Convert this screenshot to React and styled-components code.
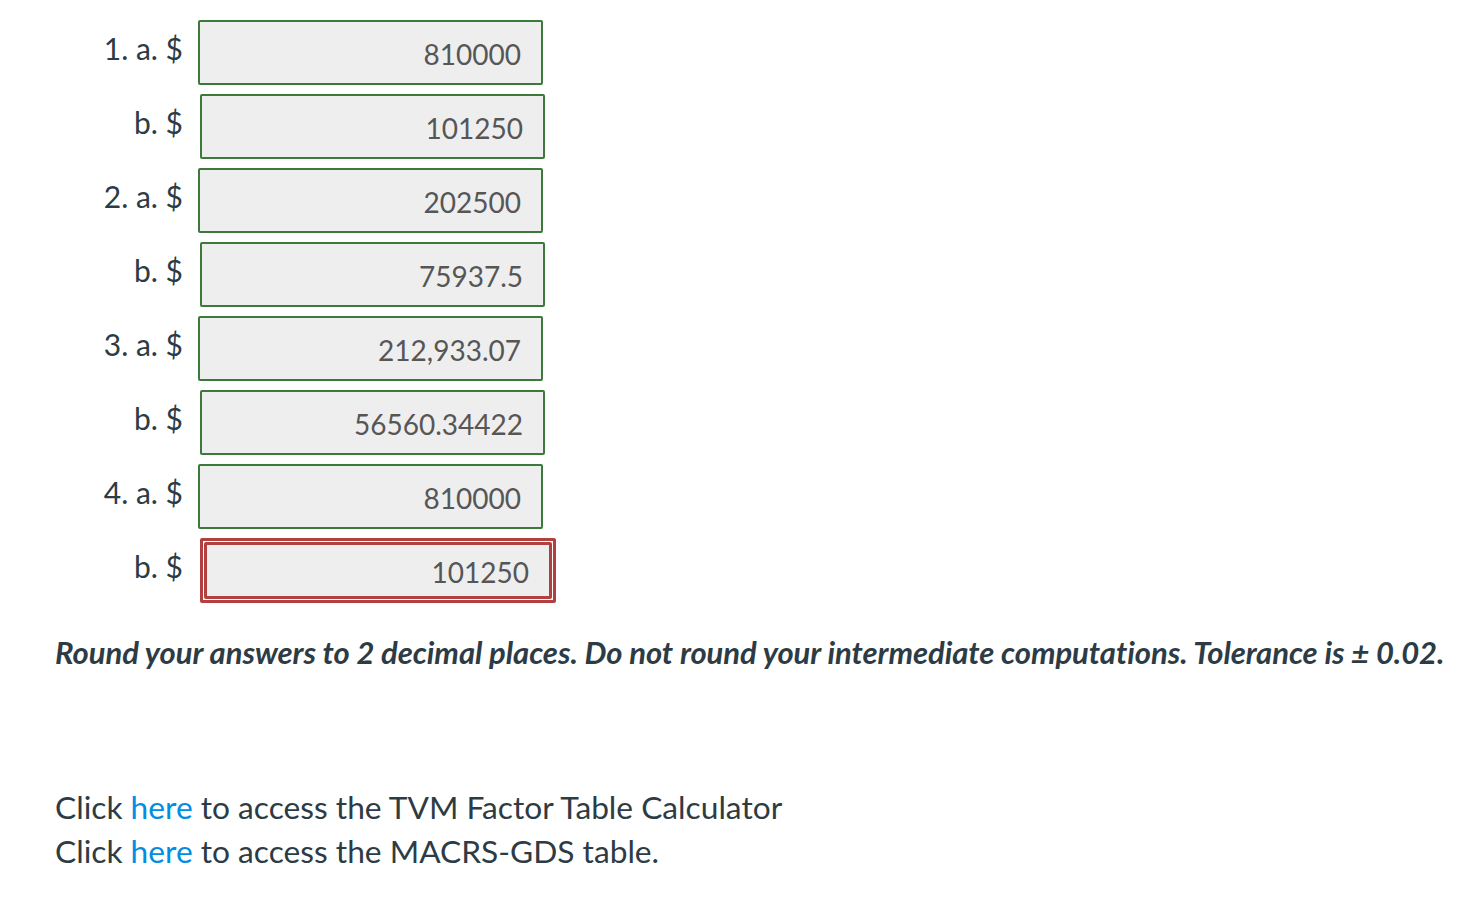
import React from 'react';
import styled, { createGlobalStyle } from 'styled-components';

const GlobalStyle = createGlobalStyle`
  body {
    margin: 0;
    background: #ffffff;
    font-family: Lato, "Open Sans", sans-serif;
    color: #2d3b45;
  }
`;

const Page = styled.div`
  padding: 20px 0 0 55px;
`;

const Answers = styled.div`
  display: flex;
  flex-direction: column;
  gap: 9px;
`;

const Row = styled.div`
  display: flex;
  align-items: flex-start;
`;

const Label = styled.div`
  width: 128px;
  text-align: right;
  font-size: 30px;
  line-height: 34px;
  padding-top: 11px;
  margin-right: ${(p) => (p.$sub ? '17px' : '15px')};
`;

const Field = styled.div`
  box-sizing: border-box;
  width: 345px;
  height: 65px;
  border: 2px solid #3b7a3b;
  border-radius: 2px;
  background: #eeeeee;
  display: flex;
  align-items: center;
  justify-content: flex-end;
  padding: 3px 20px 0 0;
  font-size: 28px;
  color: #565656;
`;

const WrongOuter = styled.div`
  box-sizing: border-box;
  width: 356px;
  height: 65px;
  border: 3px solid #b2403f;
  border-radius: 2px;
  padding: 1px;
  background: #ffffff;
`;

const WrongField = styled(Field)`
  width: 100%;
  height: 100%;
  border: 3px solid #b2403f;
  padding-right: 20px;
`;

const Note = styled.p`
  margin: 31px 0 0 0;
  font-size: 31px;
  font-style: italic;
  font-weight: 700;
  letter-spacing: -0.05px;
  line-height: 36px;
`;

const Links = styled.div`
  margin-top: 115px;
  font-size: 31.7px;
  line-height: 44px;
`;

const Link = styled.a`
  color: #008ee2;
  text-decoration: none;
`;

const rows = [
  { label: '1. a. $', value: '810000' },
  { label: 'b. $', value: '101250', sub: true },
  { label: '2. a. $', value: '202500' },
  { label: 'b. $', value: '75937.5', sub: true },
  { label: '3. a. $', value: '212,933.07' },
  { label: 'b. $', value: '56560.34422', sub: true },
  { label: '4. a. $', value: '810000' },
  { label: 'b. $', value: '101250', sub: true, wrong: true },
];

const App = () => {
  return (
    <Page>
      <GlobalStyle />
      <Answers>
        {rows.map((r, i) => (
          <Row key={i}>
            <Label $sub={r.sub}>{r.label}</Label>
            {r.wrong ? (
              <WrongOuter>
                <WrongField>{r.value}</WrongField>
              </WrongOuter>
            ) : (
              <Field>{r.value}</Field>
            )}
          </Row>
        ))}
      </Answers>
      <Note>Round your answers to 2 decimal places. Do not round your intermediate computations. Tolerance is ± 0.02.</Note>
      <Links>
        <div>
          Click <Link href="#">here</Link> to access the TVM Factor Table Calculator
        </div>
        <div>
          Click <Link href="#">here</Link> to access the MACRS-GDS table.
        </div>
      </Links>
    </Page>
  );
};

export default App;
